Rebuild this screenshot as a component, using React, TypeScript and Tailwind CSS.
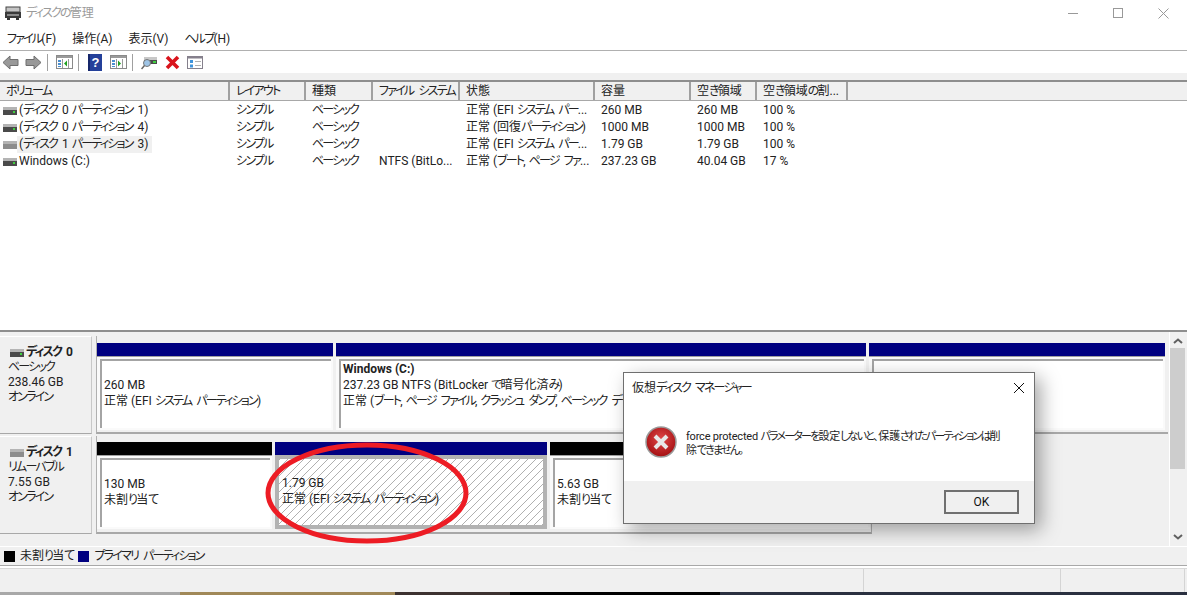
import React from 'react'

const columns = [
    { label: 'ボリューム', width: 'w-[230px]' },
    { label: 'レイアウト', width: 'w-[76px]' },
    { label: '種類', width: 'w-[67px]' },
    { label: 'ファイル システム', width: 'w-[87px]' },
    { label: '状態', width: 'w-[135px]' },
    { label: '容量', width: 'w-[96px]' },
    { label: '空き領域', width: 'w-[66px]' },
    { label: '空き領域の割...', width: 'w-[91px]' },
]

const volumes = [
    ['(ディスク 0 パーティション 1)', 'シンプル', 'ベーシック', '', '正常 (EFI システム パー...', '260 MB', '260 MB', '100 %'],
    ['(ディスク 0 パーティション 4)', 'シンプル', 'ベーシック', '', '正常 (回復パーティション)', '1000 MB', '1000 MB', '100 %'],
    ['(ディスク 1 パーティション 3)', 'シンプル', 'ベーシック', '', '正常 (EFI システム パー...', '1.79 GB', '1.79 GB', '100 %'],
    ['Windows (C:)', 'シンプル', 'ベーシック', 'NTFS (BitLo...', '正常 (ブート, ページ ファ...', '237.23 GB', '40.04 GB', '17 %'],
]

// kana runs are set tighter, the UI font in the picture has narrow kana
function Jp({ text }: { text: string }) {
    const parts = text.split(/([\u3040-\u30ff]+)/)
    return (
        <>
            {parts.map((part, i) =>
                i % 2 === 1 ? (
                    <span key={i} className={`tracking-[-1.8px] ${parts[i + 1]?.startsWith(' ') ? 'mr-[2px]' : ''}`}>{part}</span>
                ) : part
            )}
        </>
    )
}

function DriveIcon({ dim = false }: { dim?: boolean }) {
    return (
        <svg width="14" height="8" viewBox="0 0 14 8" className="shrink-0">
            <rect x="0" y="0" width="14" height="3" fill="#b4b4b4" />
            <rect x="0" y="3" width="14" height="5" fill={dim ? '#8c8c8c' : '#4a4a4a'} />
            {!dim && <rect x="10" y="4" width="2" height="2" fill="#3fd03f" />}
        </svg>
    )
}

function PaneIcon({ dir }: { dir: 'left' | 'right' }) {
    return (
        <svg width="17" height="14" viewBox="0 0 17 14">
            <rect x="0.5" y="0.5" width="16" height="13" fill="#fff" stroke="#8a8a8a" />
            <rect x="1" y="1" width="15" height="2" fill="#9a9a9a" />
            <rect x="2" y="5" width="3" height="2" fill="#4a8fd0" />
            <rect x="2" y="8" width="3" height="2" fill="#4a8fd0" />
            <rect x="2" y="11" width="3" height="1" fill="#4a8fd0" />
            <line x1="6.5" y1="4" x2="6.5" y2="13" stroke="#9a9a9a" />
            <line x1="12.5" y1="4" x2="12.5" y2="13" stroke="#9a9a9a" />
            {dir === 'left' ? <path d="M8 8.5 L11 5.5 V11.5 Z" fill="#20a020" /> : <path d="M11 8.5 L8 5.5 V11.5 Z" fill="#20a020" />}
        </svg>
    )
}

function Toolbar() {
    return (
        <div className="h-[22px] flex items-center bg-white">
            <svg width="17" height="15" viewBox="0 0 17 15" className="ml-[2px]">
                <path d="M8 1 L1 7.5 L8 14 V10.5 H16 V4.5 H8 Z" fill="#999" stroke="#6e6e6e" />
            </svg>
            <svg width="17" height="15" viewBox="0 0 17 15" className="ml-[6px]">
                <path d="M9 1 L16 7.5 L9 14 V10.5 H1 V4.5 H9 Z" fill="#999" stroke="#6e6e6e" />
            </svg>
            <div className="w-px h-[17px] bg-[#a0a0a0] ml-[5px]" />
            <div className="ml-[8px] flex"><PaneIcon dir="left" /></div>
            <div className="w-px h-[17px] bg-[#a0a0a0] ml-[5px]" />
            <svg width="14" height="17" viewBox="0 0 14 17" className="ml-[9px]">
                <rect width="14" height="17" fill="#24409a" />
                <rect x="0" y="0" width="2" height="17" fill="#16276b" />
                <text x="7.5" y="13" textAnchor="middle" fontSize="13" fontWeight="700" fill="#fff" fontFamily="Liberation Sans">?</text>
            </svg>
            <div className="ml-[8px] flex"><PaneIcon dir="right" /></div>
            <div className="w-px h-[17px] bg-[#a0a0a0] ml-[5px]" />
            <svg width="16" height="16" viewBox="0 0 16 16" className="ml-[8px]">
                <rect x="3" y="3" width="13" height="3" fill="#c8c8c8" />
                <rect x="3" y="6" width="13" height="4" fill="#4a4a4a" />
                <rect x="12" y="7" width="3" height="2" fill="#3fd03f" />
                <circle cx="6" cy="9" r="3.5" fill="#9ec4e6" stroke="#777" />
                <line x1="3.5" y1="11.5" x2="0.5" y2="15" stroke="#666" strokeWidth="1.5" />
            </svg>
            <svg width="15" height="15" viewBox="0 0 15 15" className="ml-[8px]">
                <path d="M2 2 L13 13 M13 2 L2 13" stroke="#d9141c" strokeWidth="3.6" />
            </svg>
            <svg width="16" height="13" viewBox="0 0 16 13" className="ml-[7px]">
                <rect x="0.5" y="0.5" width="15" height="12" fill="#fff" stroke="#85808c" />
                <rect x="1" y="1" width="14" height="1.5" fill="#85808c" />
                <rect x="3" y="4" width="3" height="3" fill="#3f94dc" />
                <rect x="3" y="8.5" width="3" height="3" fill="#3f94dc" />
                <rect x="8" y="5" width="6" height="1" fill="#b0b0b0" />
                <rect x="8" y="9" width="6" height="1" fill="#b0b0b0" />
            </svg>
        </div>
    )
}

function VolumeTable() {
    return (
        <div className="h-[250px] border-t-2 border-[#8e8e8e] bg-white">
            <div className="h-[19px] flex bg-[#f0f0f0] border-b border-[#a8a8a8]">
                {columns.map((c) => (
                    <div key={c.label} className={`${c.width} shrink-0 border-r-2 border-[#a0a0a0] pl-[6px] text-[12px] leading-[18px] text-[#222] whitespace-nowrap overflow-hidden`}>
                        <Jp text={c.label} />
                    </div>
                ))}
            </div>
            <div className="pt-px">
                {volumes.map((row, i) => (
                    <div key={row[0]} className="h-[17px] flex text-[12px] leading-[17px] text-[#222]">
                        {row.map((cell, j) => (
                            <div key={j} className={`${columns[j].width} shrink-0 whitespace-nowrap ${j === 0 ? 'pl-[3px] flex items-center' : 'pl-[6px]'}`}>
                                {j === 0 ? (
                                    <>
                                        <DriveIcon dim={i === 2} />
                                        <span className={`pl-[2px] ${i === 2 ? 'bg-[#f0f0f0] pr-[4px]' : ''}`}><Jp text={cell} /></span>
                                    </>
                                ) : <Jp text={cell} />}
                            </div>
                        ))}
                    </div>
                ))}
            </div>
        </div>
    )
}

function Partition({ width, bar, lines, selected = false }: { width: string; bar: string; lines: string[]; selected?: boolean }) {
    return (
        <div className={`${width} shrink-0 flex flex-col`}>
            <div className={`h-[13px] ${bar}`} />
            <div className={`h-[74px] ${selected ? 'bg-[#b2b2b2] p-[4px]' : 'bg-[#fafafa] border-t border-[#a0a0a0] p-[2px] pl-[3px]'}`}>
                <div className={`h-full ${lines.length === 3 ? 'pt-0' : 'pt-[16px]'} text-[12px] leading-[16px] text-[#222] whitespace-nowrap ${selected ? 'pl-[3px] bg-[repeating-linear-gradient(135deg,#b0b0b0_0px,#b0b0b0_1px,#fff_1px,#fff_5.66px)]' : 'pl-[2px] bg-white border-t-2 border-l-2 border-[#a4a4a4]'}`}>
                    {lines.map((l, i) => (
                        <div key={l} className={i === 0 && lines.length === 3 ? 'font-bold' : ''}><Jp text={l} /></div>
                    ))}
                </div>
            </div>
        </div>
    )
}

function DiskLabel({ name, lines, dim = false }: { name: string; lines: string[]; dim?: boolean }) {
    return (
        <div className="w-[92px] h-[98px] shrink-0 bg-[#f0f0f0] border-t border-white border-b border-r border-b-[#a8a8a8] border-r-[#c8c8c8] pl-[8px] pt-[8px] text-[12px] leading-[15px] text-[#222]">
            <div className="flex items-center gap-[2px] pl-[2px] font-bold">
                <DriveIcon dim={dim} />
                <span><Jp text={name} /></span>
            </div>
            {lines.map((l) => <div key={l}><Jp text={l} /></div>)}
        </div>
    )
}

function DiskPane() {
    return (
        <div className="h-[216px] flex bg-[#f0f0f0] border-t-2 border-[#8e8e8e]">
            <div className="flex-1 flex flex-col pt-[4px] gap-[2px]">
                <div className="flex items-start">
                    <DiskLabel name="ディスク 0" lines={['ベーシック', '238.46 GB', 'オンライン']} />
                    <div className="ml-[4px] pt-[7px] border-l border-[#b0b0b0] h-[98px] border-b-2 border-b-[#a8a8a8] flex gap-[3px] w-[1072px]">
                        <Partition width="w-[236px]" bar="bg-[#000080]" lines={['260 MB', '正常 (EFI システム パーティション)']} />
                        <Partition width="w-[530px]" bar="bg-[#000080]" lines={['Windows  (C:)', '237.23 GB NTFS (BitLocker で暗号化済み)', '正常 (ブート, ページ ファイル, クラッシュ ダンプ, ベーシック データ パーティション)']} />
                        <Partition width="w-[296px]" bar="bg-[#000080]" lines={[]} />
                    </div>
                </div>
                <div className="flex items-start">
                    <DiskLabel name="ディスク 1" lines={['リムーバブル', '7.55 GB', 'オンライン']} dim />
                    <div className="ml-[4px] pt-[6px] border-l border-r border-[#b0b0b0] h-[98px] border-b-2 border-b-[#a8a8a8] flex gap-[3px] w-[776px]">
                        <Partition width="w-[175px]" bar="bg-black" lines={['130 MB', '未割り当て']} />
                        <Partition width="w-[272px]" bar="bg-[#000080]" lines={['1.79 GB', '正常 (EFI システム パーティション)']} selected />
                        <Partition width="w-[320px]" bar="bg-black" lines={['5.63 GB', '未割り当て']} />
                    </div>
                </div>
            </div>
            <div className="w-[16px] mr-[2px] shrink-0 flex flex-col items-center bg-[#f0f0f0] border-l border-white">
                <svg width="10" height="6" viewBox="0 0 10 6" className="mt-[6px]"><path d="M1 5 L5 1.5 L9 5" fill="none" stroke="#606060" strokeWidth="2" /></svg>
                <div className="w-full h-[121px] mt-[4px] bg-[#cdcdcd]" />
                <div className="flex-1" />
                <svg width="10" height="6" viewBox="0 0 10 6" className="mb-[6px]"><path d="M1 1 L5 4.5 L9 1" fill="none" stroke="#606060" strokeWidth="2" /></svg>
            </div>
        </div>
    )
}

function ErrorDialog() {
    return (
        <div className="absolute left-[623px] top-[372px] w-[412px] h-[152px] bg-white border border-[#6f6f6f] shadow-[6px_6px_18px_rgba(0,0,0,0.35)] flex flex-col">
            <div className="h-[30px] flex items-center justify-between pl-[8px] pr-[9px] text-[12px] text-[#222]">
                <span><Jp text="仮想ディスク マネージャー" /></span>
                <svg width="12" height="12" viewBox="0 0 12 12"><path d="M1 1 L11 11 M11 1 L1 11" stroke="#111" strokeWidth="1" /></svg>
            </div>
            <div className="flex-1 flex pl-[21px] pt-[23px]">
                <svg width="32" height="32" viewBox="0 0 32 32" className="shrink-0">
                    <defs>
                        <radialGradient id="err" cx="50%" cy="40%" r="60%">
                            <stop offset="0%" stopColor="#e04848" />
                            <stop offset="100%" stopColor="#a40f12" />
                        </radialGradient>
                    </defs>
                    <circle cx="16" cy="16" r="15" fill="url(#err)" stroke="#9a9a9a" strokeWidth="1.5" />
                    <path d="M10 10 L22 22 M22 10 L10 22" stroke="#e8e8e8" strokeWidth="4" />
                </svg>
                <div className="ml-[9px] pt-[4px] w-[320px] text-[11px] leading-[14px] tracking-[-0.2px] text-[#222]">
                    <Jp text="force protected パラメーターを設定しないと、保護されたパーティションは削除できません。" />
                </div>
            </div>
            <div className="h-[42px] bg-[#f0f0f0] flex justify-end items-start pt-[9px] pr-[15px]">
                <div className="w-[75px] h-[24px] border-2 border-[#707070] bg-[#f0f0f0] text-center text-[12px] leading-[20px] text-[#111]">OK</div>
            </div>
        </div>
    )
}

export default function App() {
    return (
        <div className="relative w-[1187px] h-[595px] overflow-hidden bg-white flex flex-col [font-family:'Roboto','Noto_Sans_CJK_JP',sans-serif] [font-feature-settings:'palt']">
            <div className="h-[26px] flex items-center pl-[5px] gap-[5px] bg-white relative">
                <svg width="16" height="15" viewBox="0 0 16 15">
                    <rect x="1" y="1" width="14" height="5" fill="#c4c4c4" stroke="#444" />
                    <rect x="0" y="6" width="16" height="6" fill="#3a3a3a" />
                    <rect x="2" y="8" width="12" height="2" fill="#8a8a8a" />
                    <rect x="2" y="12" width="3" height="2" fill="#333" />
                    <rect x="11" y="12" width="3" height="2" fill="#333" />
                </svg>
                <span className="text-[12px] text-[#9a9a9a]"><Jp text="ディスクの管理" /></span>
                <div className="ml-auto flex items-center gap-[35px] pr-[18px]">
                    <div className="w-[10px] h-px bg-[#999]" />
                    <div className="w-[10px] h-[10px] border border-[#999]" />
                    <svg width="11" height="11" viewBox="0 0 11 11"><path d="M0.5 0.5 L10.5 10.5 M10.5 0.5 L0.5 10.5" stroke="#999" /></svg>
                </div>
            </div>
            <div className="h-[25px] flex items-center pl-[7px] pt-[2px] gap-[16px] text-[12px] text-[#222] border-b border-[#b0b0b0]">
                <span><Jp text="ファイル(F)" /></span>
                <span>操作(A)</span>
                <span>表示(V)</span>
                <span><Jp text="ヘルプ(H)" /></span>
            </div>
            <Toolbar />
            <div className="h-[7px] bg-[#f0f0f0]" />
            <VolumeTable />
            <DiskPane />
            <div className="h-[20px] bg-[#f0f0f0] border-t border-white border-b border-b-[#a8a8a8] flex items-center pl-[4px] text-[12px] text-[#222]">
                <div className="w-[11px] h-[11px] bg-black" />
                <span className="ml-[5px]"><Jp text="未割り当て" /></span>
                <div className="w-[11px] h-[11px] bg-[#000080] ml-[5px]" />
                <span className="ml-[5px]"><Jp text="プライマリ パーティション" /></span>
            </div>
            <div className="h-[24px] mt-[2px] bg-[#f0f0f0] border-t border-[#d8d8d8] flex">
                <div className="w-[863px]" />
                <div className="w-[197px] border-l border-[#d4d4d4]" />
                <div className="w-[124px] border-l border-[#d4d4d4]" />
                <div className="flex-1 border-l border-[#d4d4d4]" />
            </div>
            <div className="flex-1 flex">
                <div className="w-[180px] bg-[#a8a8a8]" />
                <div className="w-[215px] bg-[#a08858]" />
                <div className="w-[115px] bg-[#3c3230]" />
                <div className="w-[210px] bg-black" />
                <div className="flex-1 bg-[#2a3040]" />
            </div>
            <ErrorDialog />
            <svg width="210" height="106" viewBox="0 0 210 106" className="absolute left-[263px] top-[440px]">
                <ellipse cx="104" cy="53" rx="99" ry="48" fill="none" stroke="#ed1c24" strokeWidth="5" />
            </svg>
        </div>
    )
}
